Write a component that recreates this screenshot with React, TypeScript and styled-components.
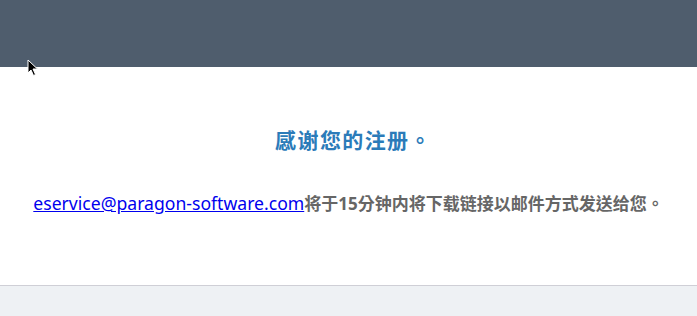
import React from "react";
import styled, { createGlobalStyle } from "styled-components";

const Global = createGlobalStyle`
  html, body { margin: 0; padding: 0; background: #ffffff; }
  body { font-family: "Noto Sans", "Noto Sans CJK TC", sans-serif; }
`;

const Page = styled.div`
  display: flex;
  flex-direction: column;
  width: 697px;
  height: 316px;
  overflow: hidden;
  position: relative;
`;

const Header = styled.header`
  height: 67px;
  background: #4f5d6d;
  flex-shrink: 0;
`;

const Main = styled.main`
  height: 218px;
  display: flex;
  flex-direction: column;
  align-items: center;
  padding-top: 57px;
  box-sizing: border-box;
  background: #ffffff;
`;

const Title = styled.h1`
  margin: 0 0 0 10px;
  font-family: "Noto Sans CJK TC", sans-serif;
  font-weight: 700;
  font-size: 21px;
  line-height: 30px;
  color: #2b7bb9;
  letter-spacing: 1.4px;
`;

const Message = styled.p`
  margin: 37px 0 0;
  font-size: 17px;
  line-height: 24px;
  color: #666666;
  font-weight: 700;
  font-family: "Noto Sans", "Noto Sans CJK TC", sans-serif;
  white-space: nowrap;
`;

const Link = styled.a`
  color: #0000ee;
  font-weight: 400;
  font-size: 17.6px;
  text-decoration: underline;
`;

const Footer = styled.footer`
  flex: 1;
  background: #eef1f4;
  border-top: 1px solid #cfcfd6;
`;

const Cursor = styled.svg`
  position: absolute;
  left: 27px;
  top: 59px;
`;

export default function App() {
  return (
    <>
      <Global />
      <Page>
        <Header />
        <Main>
          <Title>感谢您的注册。</Title>
          <Message>
            <Link href="#">eservice@paragon-software.com</Link>
            将于15分钟内将下载链接以邮件方式发送给您。
          </Message>
        </Main>
        <Footer />
        <Cursor width="12" height="18" viewBox="0 0 12 18">
          <path d="M1 1 L1 14 L4 11 L6.5 16.5 L8.5 15.5 L6 10 L10.5 10 Z" fill="#000" stroke="#fff" strokeWidth="1" />
        </Cursor>
      </Page>
    </>
  );
}
